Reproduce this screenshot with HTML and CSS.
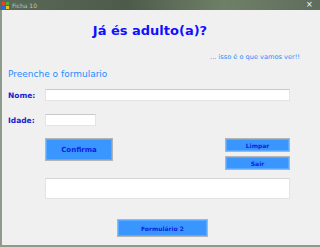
FILE: index.html
```html
<!DOCTYPE html>
<html lang="pt">
<head>
<meta charset="utf-8">
<title>Ficha 10</title>
<link rel="stylesheet" href="styles.css">
</head>
<body>
<div class="window">
  <div class="titlebar">
    <svg class="appicon" width="7" height="7" viewBox="0 0 7 7"><rect x="0" y="0" width="3" height="3" fill="#e04a2a"/><rect x="4" y="0" width="3" height="3" fill="#4caf3a"/><rect x="0" y="4" width="3" height="3" fill="#2a6be0"/><rect x="4" y="4" width="3" height="3" fill="#f0c020"/></svg>
    <span class="wtitle">Ficha 10</span>
    <span class="close">×</span>
  </div>
  <div class="client">
    <h1 class="heading">Já és adulto(a)?</h1>
    <p class="subtitle">... isso é o que vamos ver!!</p>
    <p class="lead">Preenche o formulario</p>
    <div class="row row-nome"><span class="label">Nome:</span><div class="input input-wide"></div></div>
    <div class="row row-idade"><span class="label">Idade:</span><div class="input input-short"></div></div>
    <div class="actions">
      <button class="btn btn-big">Confirma</button>
      <div class="side">
        <button class="btn btn-small">Limpar</button>
        <button class="btn btn-small">Sair</button>
      </div>
    </div>
    <div class="output"></div>
    <div class="footer"><button class="btn btn-form">Formulário 2</button></div>
  </div>
</div>
</body>
</html>
```
FILE: styles.css
```css
* { box-sizing: border-box; }
html, body { margin: 0; padding: 0; }
body { width: 320px; height: 247px; overflow: hidden; background: #9aa6b4; font-family: "DejaVu Sans", sans-serif; }
.window { width: 320px; height: 247px; display: flex; flex-direction: column; background: #8e9a8a; }
.titlebar { height: 10px; display: flex; align-items: center; padding-left: 2px; background: linear-gradient(90deg, #5b6a58 0%, #4d5c4a 40%, #6f8068 70%, #5e6d5c 100%); color: #d8ddd6; font-size: 6px; }
.appicon { margin-right: 3px; }
.wtitle { flex: 1; opacity: .8; }
.close { width: 14px; color: #fff; font-size: 8px; line-height: 8px; }
.client { flex: 1; margin-left: 2px; margin-bottom: 2px; background: #f0f0f0; padding: 0 0 0 6px; display: flex; flex-direction: column; }
.heading { margin: 11px 20px 0 -8px; text-align: center; font-size: 13px; line-height: 20px; font-weight: bold; color: #1010ff; }
.subtitle { margin: 11px 20px 0 0; text-align: right; font-size: 6.6px; line-height: 10px; color: #1e8cff; }
.lead { margin: 5px 0 0 0; font-size: 9px; line-height: 14px; color: #1e8cff; }
.row { display: flex; align-items: center; }
.row-nome { margin-top: 8px; }
.row-idade { margin-top: 13px; }
.label { width: 37px; font-size: 7.5px; font-weight: bold; color: #1a22d0; }
.input { height: 12px; background: #fff; border: 1px solid #e4e4e4; border-top-color: #c9c9c9; }
.input-wide { width: 245px; }
.input-short { width: 51px; }
.actions { margin: 12px 0 0 37px; display: flex; justify-content: space-between; width: 245px; }
.btn { margin: 0; padding: 0; background: #3a96ff; border: 1px solid #b4b4b4; box-shadow: inset 0 0 0 1px #5aa8ff; color: #0c1ee0; font-family: "DejaVu Sans", sans-serif; font-weight: bold; font-size: 6px; }
.btn-big { width: 68px; height: 23px; font-size: 7px; }
.side { display: flex; flex-direction: column; gap: 4px; width: 65px; }
.btn-small { height: 14px; font-size: 6px; }
.output { margin: 8px 0 0 37px; width: 245px; height: 21px; background: #fff; border: 1px solid #e4e4e4; border-top-color: #d6d6d6; }
.footer { margin-top: 20px; display: flex; padding-left: 109px; }
.btn-form { width: 91px; height: 18px; font-size: 6px; }
```
